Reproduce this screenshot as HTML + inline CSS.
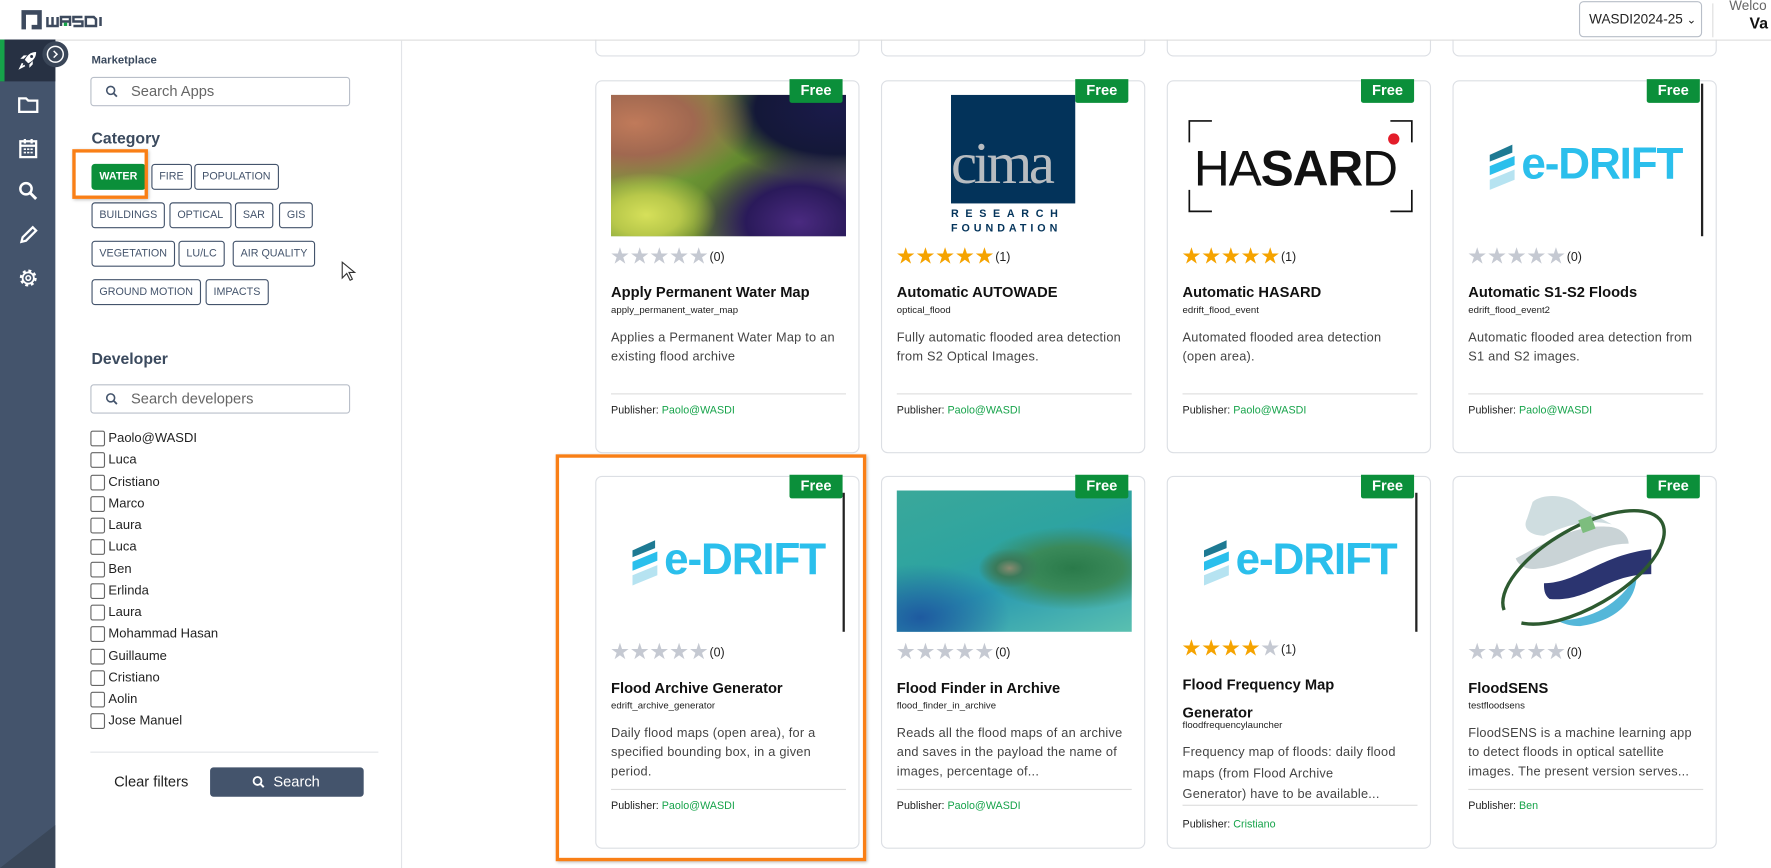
<!DOCTYPE html>
<html><head><meta charset="utf-8">
<style>
*{box-sizing:border-box;margin:0;padding:0}
html,body{width:1771px;height:868px;overflow:hidden;background:#fff;font-family:"Liberation Sans",sans-serif;color:#222}
#w{position:absolute;left:0;top:0;width:1568px;height:768px;transform:scale(1.12946,1.13021);transform-origin:0 0;overflow:hidden}
.a{position:absolute}
.nav{left:0;top:35px;width:49px;height:733px;background:#44546c}
.ico{position:absolute;left:15px;width:20px;height:20px}
.chip{position:absolute;height:23px;border:1px solid #44546c;border-radius:3px;font-size:9.5px;color:#44546c;line-height:21px;padding:0 6px;text-transform:uppercase}
.inp{position:absolute;left:80px;width:230px;height:26px;border:1px solid #b9bfc9;border-radius:3px;font-size:13px;color:#666;line-height:24px;padding-left:35px}
.cb{position:absolute;left:80px;font-size:11.5px;color:#222;height:16px;line-height:14px;padding-left:16px}
.cb:before{content:"";position:absolute;left:0;top:0;width:11px;height:12px;border:1px solid #666;border-radius:2px}
.card{position:absolute;width:234px;height:330px;border:1px solid #dcdfe4;border-radius:6px;background:#fff}
.free{position:absolute;right:14px;top:-2px;width:47px;height:21px;background:#0b8f3a;color:#fff;font-weight:bold;font-size:13px;text-align:center;line-height:20px;border-radius:0 0 2px 2px}
.img{position:absolute;left:13px;top:12px;width:208px;height:125px;overflow:hidden}
.st{position:absolute;left:12px;top:145px;font-size:20px;letter-spacing:-0.5px;color:#c5c9d2;line-height:20px}
.st b{color:#f5a300;font-weight:normal}
.st i{font-style:normal;font-size:11px;color:#222;letter-spacing:0;margin-left:1px;vertical-align:2px}
.t{position:absolute;left:13px;top:174px;font-size:13px;font-weight:bold;color:#111;width:210px;line-height:25px}
.id{position:absolute;left:13px;top:197px;font-size:8.5px;color:#222}
.d{position:absolute;left:13px;top:219px;width:200px;font-size:11.3px;line-height:17px;color:#444;letter-spacing:.2px}
.sep{position:absolute;left:13px;top:276px;width:208px;height:1px;background:#ddd}
.p{position:absolute;left:13px;top:286px;font-size:9.5px;color:#222}
.p span{color:#16a34a}
.ed{font-size:39px;font-weight:bold;color:#2bbfec;position:absolute;letter-spacing:-1px}
</style></head><body><div id="w">
<div class="card" style="left:527px;top:-280px"></div>
<div class="card" style="left:780px;top:-280px"></div>
<div class="card" style="left:1033px;top:-280px"></div>
<div class="card" style="left:1286px;top:-280px"></div>
<div class="a" style="left:0;top:0;width:1568px;height:35px;background:#fff"></div>
<div class="a" style="left:0;top:35px;width:1568px;height:1px;background:#ddd"></div>
<svg class="a" style="left:18px;top:8px" width="82" height="20" viewBox="0 0 82 20"><path d="M1 1h18v17h-9v-4h5V5H5v13H1z" fill="#3d4a5e"/><g fill="none" stroke="#3d4a5e" stroke-width="2.2"><path d="M24 7v8h9V7M28.5 7v8"/><path d="M36 15V7h8v8M36 11h8"/><path d="M55 7h-8v4h8v4h-8"/><path d="M58 15V7h7l2 2v6z"/><path d="M71 7v8"/></g><rect x="38.5" y="12" width="3" height="3" fill="#16a34a"/></svg>
<div class="a" style="left:1398px;top:1px;width:109px;height:32px;border:1px solid #b8bec8;border-radius:4px;font-size:12px;line-height:30px;padding-left:8px;color:#222">WASDI2024-25 <span style="font-size:10px">&#8964;</span></div>
<div class="a" style="left:1516px;top:3px;width:1px;height:30px;background:#ddd"></div>
<div class="a" style="left:1531px;top:-2px;font-size:12px;color:#666">Welco</div>
<div class="a" style="left:1549px;top:12px;font-size:14px;font-weight:bold;color:#111">Va</div>
<div class="a nav"></div>
<div class="a" style="left:0;top:35px;width:49px;height:37px;background:#273143"></div>
<div class="a" style="left:0;top:35px;width:4px;height:37px;background:#16a34a"></div>
<svg class="a" style="left:37px;top:36px" width="24" height="24"><circle cx="12" cy="12" r="11.5" fill="#3a4658"/><circle cx="12" cy="12" r="7" fill="none" stroke="#fff" stroke-width="1.3"/><path d="M10.5 9l3 3-3 3" fill="none" stroke="#fff" stroke-width="1.3"/></svg>
<svg class="ico" style="top:43px" viewBox="0 0 20 20"><path d="M17 3c-5 0-8 3-10 7l3 3c4-2 7-5 7-10z" fill="#fff"/><path d="M6 9H3l3-3h3zM11 14v3l3-3v-3z" fill="#fff"/><path d="M5 13l-2 4 4-2" fill="none" stroke="#fff" stroke-width="1.5"/><circle cx="13" cy="7" r="1.3" fill="#273143"/></svg>
<svg class="ico" style="top:83px" viewBox="0 0 20 20"><path d="M2 4h6l2 2h8v10H2z" fill="none" stroke="#fff" stroke-width="2"/></svg>
<svg class="ico" style="top:121px" viewBox="0 0 20 20"><rect x="3" y="4" width="14" height="14" fill="none" stroke="#fff" stroke-width="2"/><path d="M3 8h14M7 2v4M13 2v4" stroke="#fff" stroke-width="2"/><path d="M6 11h2M9 11h2M12 11h2M6 14h2M9 14h2M12 14h2" stroke="#fff" stroke-width="1.5"/></svg>
<svg class="ico" style="top:159px" viewBox="0 0 20 20"><circle cx="8" cy="8" r="5" fill="none" stroke="#fff" stroke-width="2.2"/><path d="M12 12l5 5" stroke="#fff" stroke-width="2.6"/></svg>
<svg class="ico" style="top:198px" viewBox="0 0 20 20"><path d="M4 16l1-4 9-9 3 3-9 9z" fill="none" stroke="#fff" stroke-width="2"/></svg>
<svg class="ico" style="top:236px" viewBox="0 0 20 20"><circle cx="10" cy="10" r="6" fill="none" stroke="#fff" stroke-width="3" stroke-dasharray="2.4 2.3"/><circle cx="10" cy="10" r="5" fill="none" stroke="#fff" stroke-width="1.6"/><circle cx="10" cy="10" r="2" fill="none" stroke="#fff" stroke-width="1.4"/></svg>
<svg class="a" style="left:0;top:700px" width="49" height="68"><path d="M0 68L49 30V68z" fill="#3a4759"/></svg>
<div class="a" style="left:355px;top:36px;width:1px;height:732px;background:#e2e4e8"></div>
<div class="a" style="left:81px;top:48px;font-size:10px;font-weight:bold;color:#3b4a5e">Marketplace</div>
<div class="inp" style="top:68px">Search Apps</div>
<svg class="a" style="left:93px;top:75px" width="12" height="12"><circle cx="5" cy="5" r="3.5" fill="none" stroke="#44546c" stroke-width="1.4"/><path d="M7.5 7.5l3 3" stroke="#44546c" stroke-width="1.6"/></svg>
<div class="a" style="left:81px;top:114px;font-size:14px;font-weight:bold;color:#3b4a5e">Category</div>
<div class="chip" style="left:81px;top:145px;background:#0b8f3a;border-color:#0b8f3a;color:#fff;font-weight:bold">Water</div>
<div class="chip" style="left:134px;top:145px">Fire</div>
<div class="chip" style="left:172px;top:145px">Population</div>
<div class="chip" style="left:81px;top:179px">Buildings</div>
<div class="chip" style="left:150px;top:179px">Optical</div>
<div class="chip" style="left:208px;top:179px">SAR</div>
<div class="chip" style="left:247px;top:179px">GIS</div>
<div class="chip" style="left:81px;top:213px">Vegetation</div>
<div class="chip" style="left:158px;top:213px">LU/LC</div>
<div class="chip" style="left:206px;top:213px">Air Quality</div>
<div class="chip" style="left:81px;top:247px">Ground Motion</div>
<div class="chip" style="left:182px;top:247px">Impacts</div>
<div class="a" style="left:64px;top:132px;width:67px;height:44px;border:3px solid #f97f16;box-shadow:1px 1px 3px rgba(0,0,0,.3)"></div>
<svg class="a" style="left:302px;top:231px" width="14" height="20"><path d="M1 1v14l4-4 3 6 2-1-3-6h5z" fill="#fff" stroke="#333" stroke-width="1"/></svg>
<div class="a" style="left:81px;top:309px;font-size:14px;font-weight:bold;color:#3b4a5e">Developer</div>
<div class="inp" style="top:340px">Search developers</div>
<svg class="a" style="left:93px;top:347px" width="12" height="12"><circle cx="5" cy="5" r="3.5" fill="none" stroke="#44546c" stroke-width="1.4"/><path d="M7.5 7.5l3 3" stroke="#44546c" stroke-width="1.6"/></svg>
<div class="cb" style="top:381px">Paolo@WASDI</div>
<div class="cb" style="top:400px">Luca</div>
<div class="cb" style="top:420px">Cristiano</div>
<div class="cb" style="top:439px">Marco</div>
<div class="cb" style="top:458px">Laura</div>
<div class="cb" style="top:477px">Luca</div>
<div class="cb" style="top:497px">Ben</div>
<div class="cb" style="top:516px">Erlinda</div>
<div class="cb" style="top:535px">Laura</div>
<div class="cb" style="top:554px">Mohammad Hasan</div>
<div class="cb" style="top:574px">Guillaume</div>
<div class="cb" style="top:593px">Cristiano</div>
<div class="cb" style="top:612px">Aolin</div>
<div class="cb" style="top:631px">Jose Manuel</div>
<div class="a" style="left:80px;top:665px;width:255px;height:1px;background:#e2e4e8"></div>
<div class="a" style="left:101px;top:684px;font-size:13px;color:#222">Clear filters</div>
<div class="a" style="left:186px;top:679px;width:136px;height:26px;background:#44546c;border-radius:3px;color:#fff;font-size:13px;line-height:26px;padding-left:56px">Search</div>
<svg class="a" style="left:223px;top:686px" width="12" height="12"><circle cx="5" cy="5" r="3.5" fill="none" stroke="#fff" stroke-width="1.6"/><path d="M7.5 7.5l3 3" stroke="#fff" stroke-width="1.8"/></svg>

<div class="card" style="left:527px;top:71px">
 <div class="img" style="background:radial-gradient(ellipse at 15% 85%,#d6e05a 0,#b8c84a 12%,transparent 25%),radial-gradient(ellipse at 80% 90%,#4a2a80 0,#2a1a5a 20%,transparent 40%),radial-gradient(ellipse at 10% 20%,#c07a5a 0,#a06850 20%,transparent 40%),radial-gradient(ellipse at 95% 10%,#1a1a4a 0,#141838 25%,transparent 40%),linear-gradient(135deg,#9a8a4a,#6e9a36 40%,#5a7a2a 60%,#6a5a8a)"></div>
 <div class="free">Free</div>
 <div class="st">★★★★★<i>(0)</i></div>
 <div class="t">Apply Permanent Water Map</div>
 <div class="id">apply_permanent_water_map</div>
 <div class="d">Applies a Permanent Water Map to an existing flood archive</div>
 <div class="sep"></div><div class="p">Publisher: <span>Paolo@WASDI</span></div>
</div>
<div class="card" style="left:780px;top:71px">
 <div class="a" style="left:61px;top:12px;width:110px;height:96px;background:#03335a;overflow:hidden"><div style="position:absolute;left:0;top:34px;font-family:'Liberation Serif',serif;font-size:52px;color:#b8bcc0;letter-spacing:-3px;line-height:56px">cima</div></div>
 <div class="a" style="left:61px;top:111px;font-size:9.5px;font-weight:bold;color:#03335a;letter-spacing:5.9px;line-height:13px">RESEARCH<br><span style="letter-spacing:3.5px">FOUNDATION</span></div>
 <div class="free">Free</div>
 <div class="st"><b>★★★★★</b><i>(1)</i></div>
 <div class="t">Automatic AUTOWADE</div>
 <div class="id">optical_flood</div>
 <div class="d">Fully automatic flooded area detection from S2 Optical Images.</div>
 <div class="sep"></div><div class="p">Publisher: <span>Paolo@WASDI</span></div>
</div>
<div class="card" style="left:1033px;top:71px">
 <svg class="a" style="left:18px;top:34px" width="200" height="82"><path d="M1 20V1h20M179 1h19v19M1 62v19h20M179 81h19V62" fill="none" stroke="#111" stroke-width="1.5"/><circle cx="182" cy="17" r="5" fill="#e31d2a"/><text x="5" y="58" font-family="Liberation Sans" font-size="44" fill="#111" letter-spacing="-1">HA<tspan font-weight="bold">SAR</tspan>D</text></svg>
 <div class="free">Free</div>
 <div class="st"><b>★★★★★</b><i>(1)</i></div>
 <div class="t">Automatic HASARD</div>
 <div class="id">edrift_flood_event</div>
 <div class="d">Automated flooded area detection (open area).</div>
 <div class="sep"></div><div class="p">Publisher: <span>Paolo@WASDI</span></div>
</div>
<div class="card" style="left:1286px;top:71px">
 <svg class="a" style="left:30px;top:55px" width="30" height="46"><path d="M2 10l20-9v7L2 16z" fill="#1e7a93"/><path d="M2 20l22-9v8L2 28z" fill="#2bbfec"/><path d="M2 32l22-9v9L2 41z" fill="#b6e3f1"/></svg>
 <div class="ed" style="left:60px;top:52px">e-DRIFT</div>
 <div class="a" style="left:219px;top:2px;width:1.5px;height:135px;background:#222"></div>
 <div class="free">Free</div>
 <div class="st">★★★★★<i>(0)</i></div>
 <div class="t">Automatic S1-S2 Floods</div>
 <div class="id">edrift_flood_event2</div>
 <div class="d">Automatic flooded area detection from S1 and S2 images.</div>
 <div class="sep"></div><div class="p">Publisher: <span>Paolo@WASDI</span></div>
</div>
<div class="card" style="left:527px;top:421px">
 <svg class="a" style="left:30px;top:55px" width="30" height="46"><path d="M2 10l20-9v7L2 16z" fill="#1e7a93"/><path d="M2 20l22-9v8L2 28z" fill="#2bbfec"/><path d="M2 32l22-9v9L2 41z" fill="#b6e3f1"/></svg>
 <div class="ed" style="left:60px;top:52px">e-DRIFT</div>
 <div class="a" style="left:218px;top:14px;width:1.5px;height:123px;background:#222"></div>
 <div class="free">Free</div>
 <div class="st">★★★★★<i>(0)</i></div>
 <div class="t">Flood Archive Generator</div>
 <div class="id">edrift_archive_generator</div>
 <div class="d">Daily flood maps (open area), for a specified bounding box, in a given period.</div>
 <div class="sep"></div><div class="p">Publisher: <span>Paolo@WASDI</span></div>
</div>
<div class="card" style="left:780px;top:421px">
 <div class="img" style="background:radial-gradient(ellipse at 48% 55%,#8a8a70 0,#3a7a5a 8%,transparent 18%),radial-gradient(ellipse at 75% 55%,#2a7a4a 0,#3a8a5a 20%,transparent 38%),radial-gradient(ellipse at 10% 90%,#1e5aa0 0,transparent 30%),linear-gradient(160deg,#3aa89a,#2ea4a0 40%,#2a9ab0 60%,#5ac0b0)"></div>
 <div class="free">Free</div>
 <div class="st">★★★★★<i>(0)</i></div>
 <div class="t">Flood Finder in Archive</div>
 <div class="id">flood_finder_in_archive</div>
 <div class="d">Reads all the flood maps of an archive and saves in the payload the name of images, percentage of...</div>
 <div class="sep"></div><div class="p">Publisher: <span>Paolo@WASDI</span></div>
</div>
<div class="card" style="left:1033px;top:421px">
 <svg class="a" style="left:30px;top:55px" width="30" height="46"><path d="M2 10l20-9v7L2 16z" fill="#1e7a93"/><path d="M2 20l22-9v8L2 28z" fill="#2bbfec"/><path d="M2 32l22-9v9L2 41z" fill="#b6e3f1"/></svg>
 <div class="ed" style="left:60px;top:52px">e-DRIFT</div>
 <div class="a" style="left:219px;top:14px;width:1.5px;height:123px;background:#222"></div>
 <div class="free">Free</div>
 <div class="st" style="top:142px"><b>★★★★</b>★<i>(1)</i></div>
 <div class="t" style="top:171px">Flood Frequency Map<br>Generator</div>
 <div class="id" style="top:214px">floodfrequencylauncher</div>
 <div class="d" style="top:235px;line-height:18.5px;width:205px">Frequency map of floods: daily flood maps (from Flood Archive<br>Generator) have to be available...</div>
 <div class="sep" style="top:290px"></div><div class="p" style="top:302px">Publisher: <span>Cristiano</span></div>
</div>
<div class="card" style="left:1286px;top:421px">
 <svg class="a" style="left:30px;top:12px" width="170" height="125" viewBox="0 0 170 125"><path d="M40 10c10-8 30-6 40 2 10 8 20 12 30 18-20-5-40 0-60 10-10 0-20-5-15-15z" fill="#cfdde0"/><path d="M25 60c20-10 50-30 80-28 15 0 20 10 20 15-30 0-55 20-80 22-10 2-18-3-20-9z" fill="#c9d3d6"/><path d="M50 82c30 0 50-25 95-30v22c-40 0-55 25-90 22-5-4-5-9-5-14z" fill="#2b3470"/><path d="M62 115c30 0 55-15 70-40 0 20-15 40-50 45-8 0-15-2-20-5z" fill="#54b7d9"/><ellipse cx="85" cy="68" rx="80" ry="35" transform="rotate(-30 85 68)" fill="none" stroke="#2d5a30" stroke-width="3" stroke-dasharray="170 20 200"/><rect x="82" y="24" width="12" height="12" fill="#7dbd7e" transform="rotate(-20 88 30)"/></svg>
 <div class="free">Free</div>
 <div class="st">★★★★★<i>(0)</i></div>
 <div class="t">FloodSENS</div>
 <div class="id">testfloodsens</div>
 <div class="d">FloodSENS is a machine learning app to detect floods in optical satellite images. The present version serves...</div>
 <div class="sep"></div><div class="p">Publisher: <span>Ben</span></div>
</div>
<div class="a" style="left:492px;top:402px;width:275px;height:360px;border:3px solid #f97f16;box-shadow:1px 1px 3px rgba(0,0,0,.3)"></div>
</div></body></html>
